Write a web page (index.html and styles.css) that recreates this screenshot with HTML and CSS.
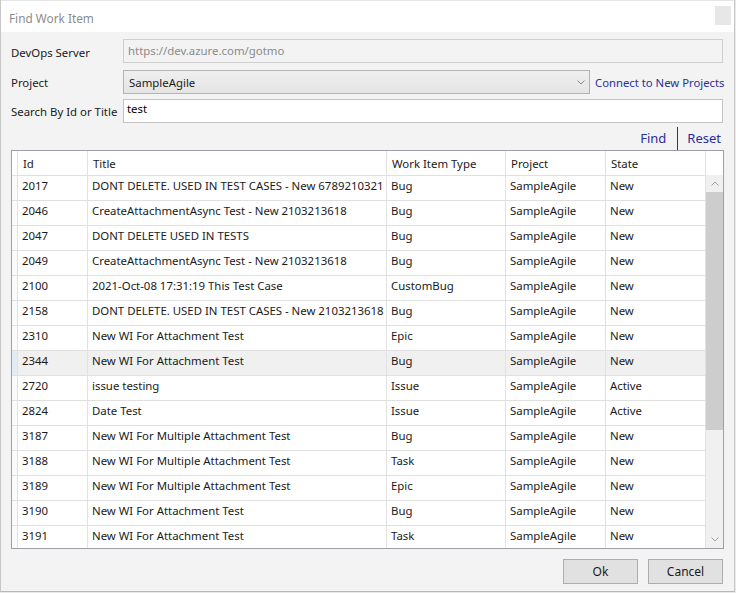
FILE: index.html
```html
<!DOCTYPE html>
<html>
<head>
<meta charset="utf-8">
<link rel="stylesheet" href="styles.css">
</head>
<body>
<div class="window">
  <div class="titlebar">
    <span class="title">Find Work Item</span>
    <span class="close"></span>
  </div>
  <div class="content">
    <div class="form-row r1">
      <label class="lbl">DevOps Server</label>
      <div class="field disabled">https://dev.azure.com/gotmo</div>
    </div>
    <div class="form-row r2">
      <label class="lbl">Project</label>
      <div class="select">
        <span>SampleAgile</span>
        <svg class="chev" width="8" height="5" viewBox="0 0 8 5"><polyline points="0.5,0.5 4,4 7.5,0.5" fill="none" stroke="#8a8a8a" stroke-width="1"/></svg>
      </div>
      <a class="link connect">Connect to New Projects</a>
    </div>
    <div class="form-row r3">
      <label class="lbl">Search By Id or Title</label>
      <div class="field search">test</div>
    </div>
    <div class="actions">
      <a class="link">Find</a>
      <span class="sep"></span>
      <a class="link">Reset</a>
    </div>
    <div class="grid">
      <div class="head">
        <div class="rh"></div>
        <div class="c">Id</div>
        <div class="c">Title</div>
        <div class="c">Work Item Type</div>
        <div class="c">Project</div>
        <div class="c">State</div>
        <div class="hfill"></div>
      </div>
      <div class="bodywrap">
        <div class="rows">
          <div class="row"><div class="rh"></div><div class="c">2017</div><div class="c">DONT DELETE. USED IN TEST CASES - New 6789210321</div><div class="c">Bug</div><div class="c">SampleAgile</div><div class="c">New</div></div>
          <div class="row"><div class="rh"></div><div class="c">2046</div><div class="c">CreateAttachmentAsync Test - New 2103213618</div><div class="c">Bug</div><div class="c">SampleAgile</div><div class="c">New</div></div>
          <div class="row"><div class="rh"></div><div class="c">2047</div><div class="c">DONT DELETE USED IN TESTS</div><div class="c">Bug</div><div class="c">SampleAgile</div><div class="c">New</div></div>
          <div class="row"><div class="rh"></div><div class="c">2049</div><div class="c">CreateAttachmentAsync Test - New 2103213618</div><div class="c">Bug</div><div class="c">SampleAgile</div><div class="c">New</div></div>
          <div class="row"><div class="rh"></div><div class="c">2100</div><div class="c">2021-Oct-08 17:31:19 This Test Case</div><div class="c">CustomBug</div><div class="c">SampleAgile</div><div class="c">New</div></div>
          <div class="row"><div class="rh"></div><div class="c">2158</div><div class="c">DONT DELETE. USED IN TEST CASES - New 2103213618</div><div class="c">Bug</div><div class="c">SampleAgile</div><div class="c">New</div></div>
          <div class="row"><div class="rh"></div><div class="c">2310</div><div class="c">New WI For Attachment Test</div><div class="c">Epic</div><div class="c">SampleAgile</div><div class="c">New</div></div>
          <div class="row sel"><div class="rh"></div><div class="c">2344</div><div class="c">New WI For Attachment Test</div><div class="c">Bug</div><div class="c">SampleAgile</div><div class="c">New</div></div>
          <div class="row"><div class="rh"></div><div class="c">2720</div><div class="c">issue testing</div><div class="c">Issue</div><div class="c">SampleAgile</div><div class="c">Active</div></div>
          <div class="row"><div class="rh"></div><div class="c">2824</div><div class="c">Date Test</div><div class="c">Issue</div><div class="c">SampleAgile</div><div class="c">Active</div></div>
          <div class="row"><div class="rh"></div><div class="c">3187</div><div class="c">New WI For Multiple Attachment Test</div><div class="c">Bug</div><div class="c">SampleAgile</div><div class="c">New</div></div>
          <div class="row"><div class="rh"></div><div class="c">3188</div><div class="c">New WI For Multiple Attachment Test</div><div class="c">Task</div><div class="c">SampleAgile</div><div class="c">New</div></div>
          <div class="row"><div class="rh"></div><div class="c">3189</div><div class="c">New WI For Multiple Attachment Test</div><div class="c">Epic</div><div class="c">SampleAgile</div><div class="c">New</div></div>
          <div class="row"><div class="rh"></div><div class="c">3190</div><div class="c">New WI For Attachment Test</div><div class="c">Bug</div><div class="c">SampleAgile</div><div class="c">New</div></div>
          <div class="row"><div class="rh"></div><div class="c">3191</div><div class="c">New WI For Attachment Test</div><div class="c">Task</div><div class="c">SampleAgile</div><div class="c">New</div></div>
        </div>
        <div class="vscroll">
          <div class="arrow">
            <svg width="8" height="5" viewBox="0 0 8 5"><polyline points="0.5,4.5 4,1 7.5,4.5" fill="none" stroke="#a0a0a0" stroke-width="1"/></svg>
          </div>
          <div class="track"><div class="thumb"></div></div>
          <div class="arrow">
            <svg width="8" height="5" viewBox="0 0 8 5"><polyline points="0.5,0.5 4,4 7.5,0.5" fill="none" stroke="#a0a0a0" stroke-width="1"/></svg>
          </div>
        </div>
      </div>
    </div>
    <div class="buttons">
      <button class="btn">Ok</button>
      <button class="btn">Cancel</button>
    </div>
  </div>
</div>
</body>
</html>
```

FILE: styles.css
```css
html, body {
  margin: 0;
  padding: 0;
  background: #e9e9e9;
}
body {
  width: 736px;
  height: 593px;
  overflow: hidden;
  font-family: "Noto Sans", "Open Sans", sans-serif;
  font-size: 11.4px;
  color: #1a1a1a;
}
.window {
  width: 733px;
  height: 591px;
  border-left: 1px solid #c8c8c8;
  border-right: 1px solid #c8c8c8;
  border-bottom: 1px solid #b8b8b8;
  background: #f3f3f3;
  display: flex;
  flex-direction: column;
}
.titlebar {
  height: 32px;
  background: #ffffff;
  display: flex;
  align-items: center;
  justify-content: space-between;
  padding: 0 3px 0 8px;
  box-sizing: border-box;
  border-top: 1px solid #e6e6e6;
}
.title {
  color: #8c8c8c;
  font-size: 11.8px;
  margin-top: 2px;
}
.close {
  width: 16px;
  height: 19px;
  background: #e7e7e7;
  margin-top: -2px;
}
.content {
  flex: 1;
  padding: 7px 10px 0 10px;
  display: flex;
  flex-direction: column;
}
.form-row {
  display: flex;
  align-items: center;
  height: 24px;
}
.r1 .lbl { padding-top: 2px; }
.r2 { margin-top: 7px; }
.r2 .lbl { padding-top: 1px; }
.r3 { margin-top: 5px; }
.lbl {
  width: 112px;
  flex: none;
  color: #1a1a1a;
}
.field {
  flex: 1;
  height: 24px;
  box-sizing: border-box;
  border: 1px solid #cfcfcf;
  padding: 0 4px;
  line-height: 22px;
  margin-right: 1px;
}
.field.disabled {
  background: #f3f3f3;
  color: #8a8a8a;
}
.field.search {
  background: #ffffff;
  border-color: #c4c4c4;
  line-height: 18px;
  padding-left: 3px;
  color: #000;
}
.select {
  width: 467px;
  flex: none;
  height: 24px;
  box-sizing: border-box;
  border: 1px solid #b4b4b4;
  background: linear-gradient(#efefef, #e4e4e4);
  display: flex;
  align-items: center;
  justify-content: space-between;
  padding: 0 4px 0 5px;
  color: #1a1a1a;
}
.chev { margin-top: 1px; }
.link {
  color: #2a2f9a;
  text-decoration: none;
  cursor: pointer;
}
.connect {
  margin-left: 5px;
  white-space: nowrap;
  font-size: 11.3px;
}
.actions {
  height: 24px;
  margin-top: 3px;
  display: flex;
  justify-content: flex-end;
  align-items: center;
  padding-right: 3px;
  font-size: 13px;
}
.sep {
  width: 1px;
  height: 23px;
  background: #3a3a3a;
  margin: 0 9px 0 11px;
}
.grid {
  width: 713px;
  height: 399px;
  box-sizing: border-box;
  border: 1px solid #9aa0a6;
  background: #ffffff;
  display: flex;
  flex-direction: column;
  overflow: hidden;
}
.head, .row {
  display: grid;
  grid-template-columns: 6px 70px 299px 119px 100px 100px;
}
.head {
  grid-template-columns: 6px 70px 299px 119px 100px 100px 17px;
  height: 24px;
  flex: none;
}
.head .c, .head .rh {
  border-right: 1px solid #e2e2e2;
}
.head .c {
  line-height: 22px;
  padding-top: 2px;
  padding-left: 5px;
  color: #1a1a1a;
}
.hfill { background: #fff; }
.bodywrap {
  flex: 1;
  display: flex;
  min-height: 0;
}
.rows {
  width: 694px;
  flex: none;
  overflow: hidden;
}
.row {
  height: 25px;
  box-sizing: border-box;
  border-top: 1px solid #e0e0e0;
}
.row .c, .row .rh {
  border-right: 1px solid #e2e2e2;
  overflow: hidden;
  white-space: nowrap;
}
.row .rh { background: #fbfbfb; }
.row .c {
  line-height: 19px;
  padding-left: 4px;
}
.row.sel { background: #f0f0f0; }
.row.sel .rh { background: #e3ecf3; }
.vscroll {
  width: 17px;
  flex: none;
  background: #f0f0f0;
  display: flex;
  flex-direction: column;
}
.arrow {
  height: 17px;
  display: flex;
  align-items: center;
  justify-content: center;
}
.track {
  flex: 1;
}
.thumb {
  height: 238px;
  background: #cdcdcd;
}
.buttons {
  display: flex;
  justify-content: flex-end;
  margin-top: 10px;
  padding-right: 1px;
}
.btn {
  width: 75px;
  height: 25px;
  background: #e1e1e1;
  border: 1px solid #adadad;
  font-family: "Noto Sans", "Open Sans", sans-serif;
  font-size: 12px;
  color: #1a1a1a;
  margin-left: 10px;
  padding: 0;
}
```
